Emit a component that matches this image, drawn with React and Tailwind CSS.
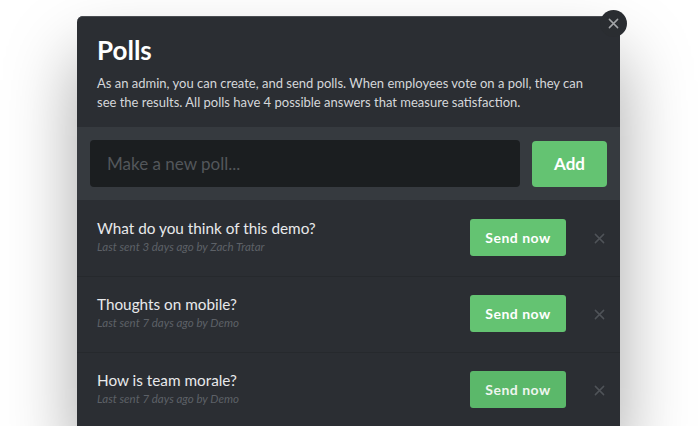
import React from "react";

const polls = [
  { q: "What do you think of this demo?", meta: "Last sent 3 days ago by Zach Tratar" },
  { q: "Thoughts on mobile?", meta: "Last sent 7 days ago by Demo" },
  { q: "How is team morale?", meta: "Last sent 7 days ago by Demo", hover: true },
];

function XIcon({ className }) {
  return (
    <svg viewBox="0 0 12 12" className={className} fill="none" stroke="currentColor" strokeWidth="1.6" strokeLinecap="round">
      <path d="M1.5 1.5 L10.5 10.5 M10.5 1.5 L1.5 10.5" />
    </svg>
  );
}

export default function App() {
  return (
    <div className="w-[700px] h-[426px] bg-white overflow-hidden pt-[16px] pl-[77px]" style={{ fontFamily: "Lato, 'Open Sans', sans-serif" }}>
      <div className="relative w-[543px] rounded-t-[6px] bg-[#2b2e33] shadow-[0_40px_70px_rgba(0,0,0,0.35)]">
        <button className="absolute -top-[6px] -right-[7px] w-[27px] h-[27px] rounded-full bg-[#2a2d31] flex items-center justify-center text-[#a3a5a8]">
          <XIcon className="w-[11px] h-[11px]" />
        </button>
        <div className="px-[20px] pt-[16px] pb-[15px] border-t border-[#4a4d52] rounded-t-[6px]">
          <h1 className="text-[26px] leading-[34px] font-bold text-white">Polls</h1>
          <p className="mt-[7px] text-[13px] leading-[19px] text-[#d5d7da]">
            As an admin, you can create, and send polls. When employees vote on a poll, they can see the results. All polls have 4 possible answers that measure satisfaction.
          </p>
        </div>
        <div className="bg-[#363a3f] px-[13px] pt-[13px] pb-[13px] flex gap-[12px] items-center">
          <div className="flex-1 h-[47px] rounded-[4px] bg-[#1b1e20] flex items-center px-[17px] text-[17px] text-[#53575b]">
            Make a new poll...
          </div>
          <button className="w-[75px] h-[46px] rounded-[4px] bg-[#64c372] text-white text-[17px] font-bold">Add</button>
        </div>
        {polls.map((p, i) => (
          <div key={i} className={`flex items-center h-[76px] pl-[20px] pr-[15px] ${i > 0 ? "border-t border-[#26292d]" : ""}`}>
            <div className="flex-1 -mt-[4px]">
              <div className="text-[15.3px] leading-[20px] text-[#e8e9eb]">{p.q}</div>
              <div className="mt-[1px] text-[11.5px] leading-[16px] italic text-[#5d6167]">{p.meta}</div>
            </div>
            <button className={`w-[96px] h-[37px] ${i > 0 ? "-mt-[2px]" : "-mt-[1px]"} rounded-[3px] text-[14px] font-bold tracking-[0.5px] ${p.hover ? "bg-[#5bb86a] text-[#eef5ef]" : "bg-[#64c372] text-white"}`}>
              Send now
            </button>
            <div className="w-[39px] flex justify-end text-[#4f5358]">
              <XIcon className="w-[11px] h-[11px]" />
            </div>
          </div>
        ))}
      </div>
    </div>
  );
}
